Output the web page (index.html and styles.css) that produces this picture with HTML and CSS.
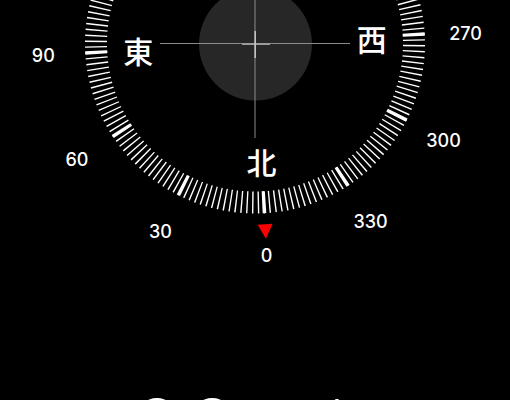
FILE: index.html
```html
<!DOCTYPE html>
<html lang="ja">
<head>
<meta charset="utf-8">
<title>コンパス</title>
<link rel="stylesheet" href="styles.css">
</head>
<body>
<main class="screen">
  <svg class="compass" width="510" height="400" viewBox="0 0 510 400">
    <circle class="bubble" cx="255.5" cy="44" r="56.5"/>

    <g transform="rotate(176.8 255 43.5)">
      <circle class="ticks" cx="255" cy="43.5" r="159" pathLength="360"/>
      <circle class="ticks-major" cx="255" cy="43.5" r="159" pathLength="360"/>
      <polygon class="north-mark" points="247.5,-137.5 262.5,-137.5 255,-152"/>
    </g>

    <line class="cross" x1="160" y1="43.5" x2="350" y2="43.5"/>
    <line class="cross" x1="255" y1="0" x2="255" y2="138"/>
    <line class="cross-h" x1="242" y1="44" x2="270" y2="44"/>
    <line class="cross-v" x1="255.2" y1="31" x2="255.2" y2="58"/>

    <text class="cardinal" x="261.5" y="160.5">北</text>
    <text class="cardinal" x="138.2" y="50">東</text>
    <text class="cardinal" x="371.8" y="37.5">西</text>

    <text class="deg" x="266.5" y="255">0</text>
    <text class="deg" x="160.5" y="231.5">30</text>
    <text class="deg" x="77" y="159">60</text>
    <text class="deg" x="43.3" y="55">90</text>
    <text class="deg" x="465.5" y="33">270</text>
    <text class="deg" x="443.5" y="140.5">300</text>
    <text class="deg" x="370.5" y="221.5">330</text>

    <text class="heading" x="104" y="460">1</text>
    <text class="heading" x="157" y="457">8</text>
    <text class="heading" x="212" y="457">3</text>
    <text class="heading" x="256" y="460">°</text>
    <text class="heading-dir" x="337" y="450">南</text>
  </svg>
</main>
</body>
</html>
```

FILE: styles.css
```css
html, body {
  margin: 0;
  padding: 0;
  background: #000;
}

.screen {
  width: 510px;
  height: 400px;
  overflow: hidden;
  background: #000;
}

.compass {
  display: block;
}

.bubble {
  fill: #272727;
}

.ticks {
  fill: none;
  stroke: #fff;
  stroke-width: 22;
  stroke-dasharray: 0.5 1.5;
  stroke-dashoffset: 0.25;
}

.ticks-major {
  fill: none;
  stroke: #fff;
  stroke-width: 22;
  stroke-dasharray: 1.25 28.75;
  stroke-dashoffset: 0.625;
}

.north-mark {
  fill: #ff0000;
}

.cross {
  stroke: #8c8c8c;
  stroke-width: 1;
}

.cross-h {
  stroke: #9a9a9a;
  stroke-width: 2;
}

.cross-v {
  stroke: #c8c8c8;
  stroke-width: 1.5;
}

.cardinal {
  fill: #fff;
  font-family: "Noto Sans CJK JP", "Noto Sans CJK SC", sans-serif;
  font-weight: 500;
  font-size: 30px;
  text-anchor: middle;
  dominant-baseline: central;
}

.deg {
  fill: #fff;
  font-family: Inter, "Liberation Sans", sans-serif;
  font-weight: 500;
  font-size: 18px;
  text-anchor: middle;
  dominant-baseline: central;
}

.heading {
  fill: #fff;
  font-family: Inter, "Liberation Sans", sans-serif;
  font-weight: 300;
  font-size: 80px;
  text-anchor: middle;
}

.heading-dir {
  fill: #fff;
  font-family: "Noto Sans CJK JP", sans-serif;
  font-weight: 300;
  font-size: 60px;
  text-anchor: middle;
}
```
